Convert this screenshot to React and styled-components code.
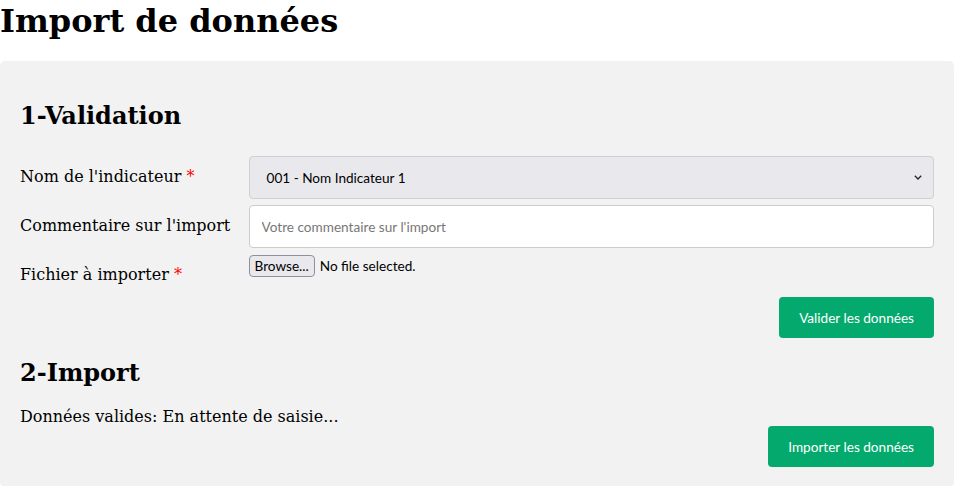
import React from "react";
import styled, { createGlobalStyle } from "styled-components";

const GlobalStyle = createGlobalStyle`
  body {
    margin: 0;
    font-family: "DejaVu Serif", serif;
    font-size: 16px;
    color: #000;
    background: #fff;
  }
`;

const FIELD_FONT = `Lato, "Noto Sans", sans-serif`;

const Title = styled.h1`
  font-size: 32px;
  font-weight: bold;
  margin: 2px 0 21px;
`;

const Panel = styled.div`
  background-color: #f2f2f2;
  border-radius: 5px;
  padding: 20px;
`;

const SectionTitle = styled.h2`
  font-size: 24px;
  font-weight: bold;
  margin: 20px 0;
`;

const Row = styled.div`
  display: grid;
  grid-template-columns: 25% 75%;
  align-items: start;
  padding-top: 6px;
`;

const Label = styled.label`
  line-height: 42px;
  white-space: nowrap;
`;

const Required = styled.span`
  color: #ff0000;
`;

const Select = styled.div`
  box-sizing: border-box;
  height: 43px;
  display: flex;
  align-items: center;
  padding: 0 11px 0 17px;
  border: 1px solid #cfcfd4;
  border-radius: 4px;
  background: #e9e9ed;
  font-family: ${FIELD_FONT};
  font-size: 13.6px;
  color: #000;
`;

const Chevron = styled.svg`
  margin-left: auto;
  width: 8px;
  height: 5px;
`;

const Input = styled.input`
  box-sizing: border-box;
  width: 100%;
  height: 43px;
  padding: 0 12px;
  border: 1px solid #ccc;
  border-radius: 4px;
  background: #fff;
  font-family: ${FIELD_FONT};
  font-size: 13.6px;
  outline: none;
  &::placeholder {
    color: #777;
  }
`;

const FileField = styled.div`
  display: flex;
  align-items: center;
  gap: 5px;
  height: 22px;
  margin-top: 1px;
  font-family: ${FIELD_FONT};
  font-size: 13.6px;
`;

const BrowseButton = styled.button`
  box-sizing: border-box;
  height: 22px;
  padding: 0 5px;
  border: 1px solid #8f8f9d;
  border-radius: 4px;
  background: #e9e9ed;
  font-family: inherit;
  font-size: inherit;
  color: #000;
`;

const Actions = styled.div`
  display: flex;
  justify-content: flex-end;
  margin-top: ${(p) => p.$top || 0}px;
`;

const Button = styled.button`
  height: 41px;
  padding: 0 20px;
  border: none;
  border-radius: 4px;
  background-color: #04aa6d;
  color: #fff;
  font-family: ${FIELD_FONT};
  font-size: 13.6px;
  cursor: pointer;
`;

const Status = styled.p`
  margin: 0;
`;

export default function App() {
  return (
    <>
      <GlobalStyle />
      <Title>Import de données</Title>
      <Panel>
        <SectionTitle>1-Validation</SectionTitle>
        <Row>
          <Label>
            Nom de l'indicateur <Required>*</Required>
          </Label>
          <Select>
            001 - Nom Indicateur 1
            <Chevron viewBox="0 0 8 5">
              <path d="M0.8 0.8 L4 4 L7.2 0.8" fill="none" stroke="#222" strokeWidth="1.3" />
            </Chevron>
          </Select>
        </Row>
        <Row>
          <Label>Commentaire sur l'import</Label>
          <Input placeholder="Votre commentaire sur l'import" />
        </Row>
        <Row>
          <Label>
            Fichier à importer <Required>*</Required>
          </Label>
          <FileField>
            <BrowseButton>Browse...</BrowseButton>
            <span>No file selected.</span>
          </FileField>
        </Row>
        <Actions $top={1}>
          <Button>Valider les données</Button>
        </Actions>
        <SectionTitle>2-Import</SectionTitle>
        <Status>Données valides: En attente de saisie...</Status>
        <Actions>
          <Button>Importer les données</Button>
        </Actions>
      </Panel>
    </>
  );
}
